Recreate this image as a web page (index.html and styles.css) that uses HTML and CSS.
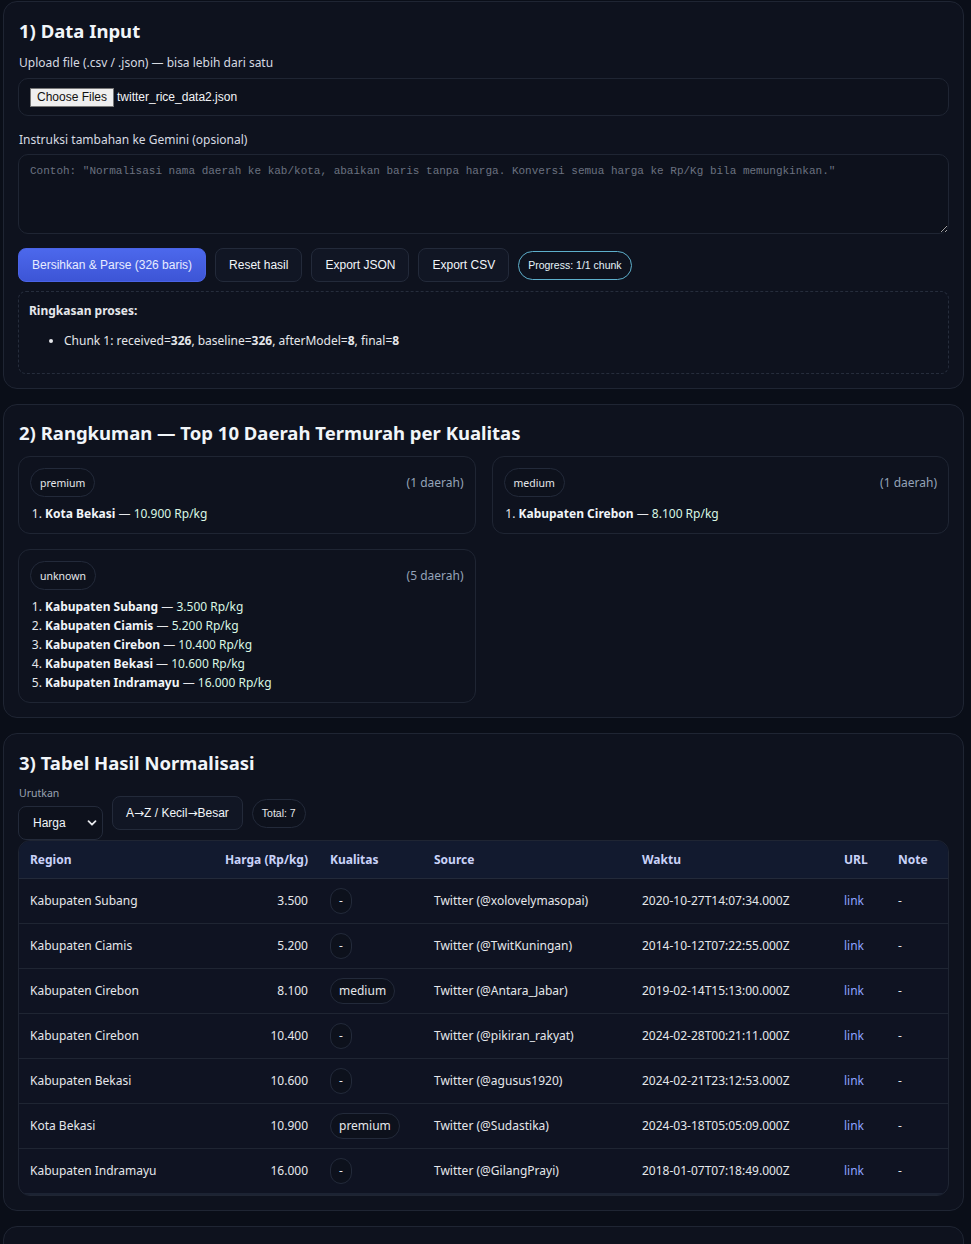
FILE: index.html
```html
<!DOCTYPE html>
<html lang="id">
<head>
<meta charset="utf-8">
<title>Normalisasi Harga Beras</title>
<link rel="stylesheet" href="styles.css">
</head>
<body>
<main class="page">
  <section class="card">
    <h2 class="card-title">1) Data Input</h2>
    <label class="field-label">Upload file (.csv / .json) — bisa lebih dari satu</label>
    <div class="file-box">
      <span class="file-btn">Choose Files</span>
      <span class="file-name">twitter_rice_data2.json</span>
    </div>
    <label class="field-label field-label-2">Instruksi tambahan ke Gemini (opsional)</label>
    <textarea class="instr" placeholder="Contoh: &quot;Normalisasi nama daerah ke kab/kota, abaikan baris tanpa harga. Konversi semua harga ke Rp/Kg bila memungkinkan.&quot;"></textarea>
    <div class="actions">
      <button class="btn btn-primary">Bersihkan &amp; Parse (326 baris)</button>
      <button class="btn">Reset hasil</button>
      <button class="btn">Export JSON</button>
      <button class="btn">Export CSV</button>
      <span class="progress">Progress: 1/1 chunk</span>
    </div>
    <div class="summary">
      <div class="summary-title">Ringkasan proses:</div>
      <ul class="summary-list">
        <li>Chunk 1: received=<b>326</b>, baseline=<b>326</b>, afterModel=<b>8</b>, final=<b>8</b></li>
      </ul>
    </div>
  </section>

  <section class="card">
    <h2 class="card-title card-title-2">2) Rangkuman — Top 10 Daerah Termurah per Kualitas</h2>
    <div class="rank-grid">
      <div class="rank-box">
        <div class="rank-head"><span class="pill">premium</span><span class="count">(1 daerah)</span></div>
        <ol class="rank-list">
          <li><b>Kota Bekasi</b> — <span class="price">10.900 Rp/kg</span></li>
        </ol>
      </div>
      <div class="rank-box">
        <div class="rank-head"><span class="pill">medium</span><span class="count">(1 daerah)</span></div>
        <ol class="rank-list">
          <li><b>Kabupaten Cirebon</b> — <span class="price">8.100 Rp/kg</span></li>
        </ol>
      </div>
      <div class="rank-box">
        <div class="rank-head"><span class="pill">unknown</span><span class="count">(5 daerah)</span></div>
        <ol class="rank-list">
          <li><b>Kabupaten Subang</b> — <span class="price">3.500 Rp/kg</span></li>
          <li><b>Kabupaten Ciamis</b> — <span class="price">5.200 Rp/kg</span></li>
          <li><b>Kabupaten Cirebon</b> — <span class="price">10.400 Rp/kg</span></li>
          <li><b>Kabupaten Bekasi</b> — <span class="price">10.600 Rp/kg</span></li>
          <li><b>Kabupaten Indramayu</b> — <span class="price">16.000 Rp/kg</span></li>
        </ol>
      </div>
    </div>
  </section>

  <section class="card">
    <h2 class="card-title">3) Tabel Hasil Normalisasi</h2>
    <div class="toolbar">
      <div class="sort-group">
        <span class="small-label">Urutkan</span>
        <div class="select">
          <span>Harga</span>
          <svg width="10" height="10" viewBox="0 0 10 10"><path d="M1.5 3.2 L5 6.7 L8.5 3.2" fill="none" stroke="#e5e7eb" stroke-width="1.8" stroke-linecap="round" stroke-linejoin="round"/></svg>
        </div>
      </div>
      <button class="btn btn-sort">A<span class="arrow">→</span>Z / Kecil<span class="arrow">→</span>Besar</button>
      <span class="pill pill-total">Total: 7</span>
    </div>
    <div class="table-wrap">
      <table class="data">
        <thead>
          <tr><th class="c-region">Region</th><th class="c-price">Harga (Rp/kg)</th><th class="c-qual">Kualitas</th><th class="c-src">Source</th><th class="c-time">Waktu</th><th class="c-url">URL</th><th class="c-note">Note</th></tr>
        </thead>
        <tbody>
          <tr><td>Kabupaten Subang</td><td class="num">3.500</td><td><span class="pill pill-sm">-</span></td><td>Twitter (@xolovelymasopai)</td><td>2020-10-27T14:07:34.000Z</td><td><a>link</a></td><td>-</td></tr>
          <tr><td>Kabupaten Ciamis</td><td class="num">5.200</td><td><span class="pill pill-sm">-</span></td><td>Twitter (@TwitKuningan)</td><td>2014-10-12T07:22:55.000Z</td><td><a>link</a></td><td>-</td></tr>
          <tr><td>Kabupaten Cirebon</td><td class="num">8.100</td><td><span class="pill pill-sm">medium</span></td><td>Twitter (@Antara_Jabar)</td><td>2019-02-14T15:13:00.000Z</td><td><a>link</a></td><td>-</td></tr>
          <tr><td>Kabupaten Cirebon</td><td class="num">10.400</td><td><span class="pill pill-sm">-</span></td><td>Twitter (@pikiran_rakyat)</td><td>2024-02-28T00:21:11.000Z</td><td><a>link</a></td><td>-</td></tr>
          <tr><td>Kabupaten Bekasi</td><td class="num">10.600</td><td><span class="pill pill-sm">-</span></td><td>Twitter (@agusus1920)</td><td>2024-02-21T23:12:53.000Z</td><td><a>link</a></td><td>-</td></tr>
          <tr><td>Kota Bekasi</td><td class="num">10.900</td><td><span class="pill pill-sm">premium</span></td><td>Twitter (@Sudastika)</td><td>2024-03-18T05:05:09.000Z</td><td><a>link</a></td><td>-</td></tr>
          <tr><td>Kabupaten Indramayu</td><td class="num">16.000</td><td><span class="pill pill-sm">-</span></td><td>Twitter (@GilangPrayi)</td><td>2018-01-07T07:18:49.000Z</td><td><a>link</a></td><td>-</td></tr>
        </tbody>
      </table>
      <div class="scroll-track"></div>
    </div>
  </section>

  <section class="card card-last"></section>
</main>
</body>
</html>
```

FILE: styles.css
```css
* { box-sizing: border-box; }

html, body {
  margin: 0;
  padding: 0;
  background: #0a0e18;
}

body {
  font-family: "Noto Sans", "Liberation Sans", sans-serif;
  font-size: 12px;
  color: #e5e7eb;
}

.page {
  width: 961px;
  margin: 0 0 0 3px;
  padding-top: 1px;
  display: flex;
  flex-direction: column;
  gap: 15px;
}

.card {
  background: #0e121e;
  border: 1px solid #1f2533;
  border-radius: 14px;
  padding: 14px 14px 14px 14px;
}

.card-last {
  height: 40px;
}

.card-title {
  margin: 2px 0 10px 1px;
  font-size: 18.5px;
  font-weight: 700;
  color: #f1f5f9;
  line-height: 26px;
}

.card-title-2 { margin-top: 1px; }

.field-label {
  display: block;
  font-size: 12px;
  color: #d6dae2;
  line-height: 17px;
  margin: 0 0 7px 1px;
}

.field-label-2 { margin-bottom: 6px; }

.file-box {
  height: 38px;
  border: 1px solid #1f2533;
  border-radius: 10px;
  background: #0d111c;
  display: flex;
  align-items: center;
  padding: 0 11px;
  gap: 3px;
  margin-bottom: 15px;
}

.file-btn {
  font-family: "Liberation Sans", Arial, sans-serif;
  font-size: 12px;
  color: #111;
  background: #efefef;
  border: 1px solid #767676;
  padding: 1px 6px;
  line-height: 15px;
}

.file-name {
  font-family: "Liberation Sans", Arial, sans-serif;
  font-size: 12px;
  color: #f3f4f6;
}

.instr {
  display: block;
  width: 100%;
  height: 80px;
  background: #0d111c;
  border: 1px solid #1f2533;
  border-radius: 10px;
  padding: 10px 11px;
  font-family: "Liberation Mono", "DejaVu Sans Mono", monospace;
  font-size: 11px;
  color: #e5e7eb;
  resize: vertical;
  margin: 0 0 14px;
}

.instr::placeholder {
  color: #6b7280;
}

.actions {
  display: flex;
  align-items: center;
  gap: 9px;
  margin-bottom: 9px;
}

.btn {
  font-family: "Liberation Sans", Arial, sans-serif;
  font-size: 12px;
  color: #f1f5f9;
  background: #111624;
  border: 1px solid #232a3a;
  border-radius: 8px;
  height: 34px;
  padding: 0 13px;
  cursor: pointer;
}

.btn-primary {
  background: linear-gradient(180deg, #4c68ec, #3d55d6);
  border-color: #4a63e6;
  color: #e8ecff;
}

.progress {
  font-family: "Liberation Sans", Arial, sans-serif;
  font-size: 10.5px;
  color: #e5f4fa;
  border: 1px solid #5eb0cc;
  border-radius: 999px;
  height: 29px;
  display: inline-flex;
  align-items: center;
  padding: 0 9px;
}

.summary {
  border: 1px dashed #262d3c;
  border-radius: 8px;
  padding: 10px 10px 23px;
}

.summary-title {
  font-weight: 700;
  font-size: 12px;
  line-height: 18px;
  margin-bottom: 12px;
}

.summary-list {
  margin: 0;
  padding-left: 35px;
  line-height: 18px;
  font-size: 12px;
}

.rank-grid {
  display: grid;
  grid-template-columns: 1fr 1fr;
  column-gap: 16px;
  row-gap: 15px;
  align-items: start;
}

.rank-box {
  border: 1px solid #1f2533;
  border-radius: 12px;
  padding: 11px 11px 10px 11px;
}

.rank-head {
  display: flex;
  justify-content: space-between;
  align-items: center;
  margin-bottom: 7px;
}

.pill {
  display: inline-flex;
  align-items: center;
  height: 29px;
  padding: 0 9px;
  border: 1px solid #232a3a;
  border-radius: 999px;
  font-size: 10.5px;
  color: #e5e7eb;
  background: #0d111c;
}

.count {
  color: #94a3b8;
  font-size: 12px;
}

.rank-list {
  margin: 0;
  padding-left: 15px;
  line-height: 19px;
  font-size: 12px;
}

.rank-list b { color: #f1f5f9; }

.price { color: #d9f7e4; }

.toolbar {
  display: flex;
  align-items: center;
  gap: 9px;
  margin-top: 0;
}

.sort-group {
  display: flex;
  flex-direction: column;
  gap: 6px;
}

.small-label {
  font-size: 10.5px;
  color: #9aa3b2;
  line-height: 14px;
  padding-left: 1px;
}

.select {
  width: 85px;
  height: 34px;
  border: 1px solid #232a3a;
  border-radius: 8px;
  background: #0d111c;
  display: flex;
  align-items: center;
  justify-content: space-between;
  padding: 0 5px 0 14px;
  font-family: "Liberation Sans", Arial, sans-serif;
  font-size: 12px;
  color: #f1f5f9;
}

.btn-sort {
  height: 34px;
  padding: 0 13px;
}

.arrow {
  font-family: "DejaVu Sans", sans-serif;
  font-size: 12px;
}

.pill-total {
  font-family: "Liberation Sans", Arial, sans-serif;
  font-size: 10.5px;
  height: 29px;
}

.table-wrap {
  border: 1px solid #1f2533;
  border-radius: 12px;
  overflow: hidden;
  background: #0f1322;
}

.scroll-track {
  height: 2px;
  background: #1c2333;
}

.data {
  width: 100%;
  border-collapse: collapse;
  font-size: 12px;
}

.data th {
  background: #121a2f;
  color: #c9d2f8;
  font-weight: 700;
  text-align: left;
  height: 37px;
  padding: 0 11px;
  border-bottom: 1px solid #232a3a;
}

.data td {
  height: 45px;
  padding: 0 11px;
  border-bottom: 1px solid #1f2533;
  color: #e5e7eb;
}

.data tbody tr:last-child td { border-bottom: none; }

.data th.c-price, .data td.num { text-align: right; }

.c-region { width: 185px; }
.c-price { width: 115px; }
.c-qual { width: 104px; }
.c-src { width: 208px; }
.c-time { width: 202px; }
.c-url { width: 54px; }

.pill-sm {
  height: 26px;
  padding: 0 8px;
  font-size: 12px;
}

.data a { color: #8ea2ff; }
```
